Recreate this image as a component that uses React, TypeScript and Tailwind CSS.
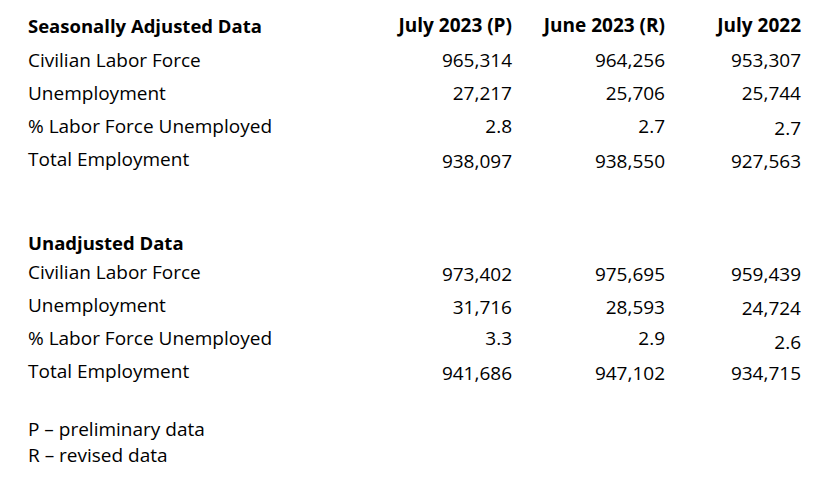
const font = { fontFamily: '"Open Sans", Lato, sans-serif' };

type Row = { label: string; values: string[]; shift?: string[] };

const seasonal: Row[] = [
  { label: 'Civilian Labor Force', values: ['965,314', '964,256', '953,307'] },
  { label: 'Unemployment', values: ['27,217', '25,706', '25,744'] },
  { label: '% Labor Force Unemployed', values: ['2.8', '2.7', '2.7'], shift: ['', '', 'pt-[2px]'] },
  { label: 'Total Employment', values: ['938,097', '938,550', '927,563'], shift: ['pt-[2px]', 'pt-[2px]', 'pt-[2px]'] },
];

const unadjusted: Row[] = [
  { label: 'Civilian Labor Force', values: ['973,402', '975,695', '959,439'], shift: ['pt-[2px]', 'pt-[2px]', 'pt-[2px]'] },
  { label: 'Unemployment', values: ['31,716', '28,593', '24,724'], shift: ['pt-[2px]', 'pt-[2px]', 'pt-[3px]'] },
  { label: '% Labor Force Unemployed', values: ['3.3', '2.9', '2.6'], shift: ['', '', 'pt-[4px]'] },
  { label: 'Total Employment', values: ['941,686', '947,102', '934,715'], shift: ['pt-[2px]', 'pt-[2px]', 'pt-[2px]'] },
];

const widths = ['w-[150px]', 'w-[153px]', 'w-[136px]'];

function DataRow({ row }: { row: Row }) {
  return (
    <div className="flex h-[33px] leading-[33px]">
      <div className="w-[334px]">{row.label}</div>
      {row.values.map((v, i) => (
        <div key={i} className={`${widths[i]} text-right ${row.shift?.[i] ?? ''}`}>{v}</div>
      ))}
    </div>
  );
}

export default function App() {
  return (
    <div className="w-[826px] h-[481px] bg-white text-black text-[19px] pl-[28px] pt-[9px]" style={font}>
      {/* Seasonally adjusted */}
      <div className="flex h-[35px] leading-[33px] font-bold">
        <div className="w-[334px] text-[18.5px]">Seasonally Adjusted Data</div>
        <div className="w-[150px] text-right">July 2023 (P)</div>
        <div className="w-[153px] text-right">June 2023 (R)</div>
        <div className="w-[136px] text-right">July 2022</div>
      </div>
      {seasonal.map(r => <DataRow key={r.label} row={r} />)}

      {/* Unadjusted */}
      <div className="mt-[50px] h-[30px] leading-[33px] font-bold text-[18.5px]">Unadjusted Data</div>
      {unadjusted.map(r => <DataRow key={r.label} row={r} />)}

      <div className="mt-[28px] leading-[26px]">
        <p>P – preliminary data</p>
        <p>R – revised data</p>
      </div>
    </div>
  );
}
